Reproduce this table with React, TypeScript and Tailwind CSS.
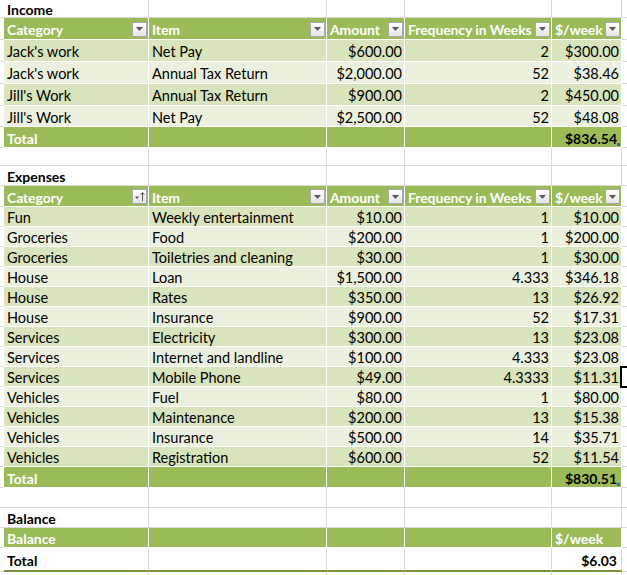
import React from "react";

const GRID = "grid grid-cols-[4px_145px_178px_78px_147px_70px_60px]";
const GRAY = "border-[#D9D9D9]";

type Kind = "title" | "header" | "band1" | "band2" | "total" | "blank" | "bheader" | "btotal";

function FilterBtn({ sort }: { sort?: boolean }) {
  return (
    <div className="w-[15px] h-[15px] shrink-0 border border-[#A9A9A9] bg-gradient-to-b from-white to-[#E4E4E4] flex items-center justify-center -mt-[2px]">
      {sort ? (
        <svg width="13" height="13" viewBox="0 0 13 13">
          <path d="M2 6.5 L6 6.5 L4 9 Z" fill="#555" />
          <path d="M9.5 11 L9.5 3" stroke="#555" strokeWidth="1" />
          <path d="M7.5 5 L9.5 2.5 L11.5 5" stroke="#555" strokeWidth="1" fill="none" />
        </svg>
      ) : (
        <svg width="9" height="6" viewBox="0 0 9 6">
          <path d="M1 1 L8 1 L4.5 5 Z" fill="#5A5A5A" />
        </svg>
      )}
    </div>
  );
}

function Row({
  kind,
  h,
  cells,
  sortFirst,
}: {
  kind: Kind;
  h: string;
  cells: string[];
  sortFirst?: boolean;
}) {
  const isTable = kind === "header" || kind === "band1" || kind === "band2" || kind === "total" || kind === "bheader";
  const bg =
    kind === "header" || kind === "total" || kind === "bheader"
      ? "bg-[#9BBB59]"
      : kind === "band1"
      ? "bg-[#D8E4BC]"
      : kind === "band2"
      ? "bg-[#EBF1DE]"
      : "bg-white";
  const border = isTable ? "border-white" : GRAY;
  const bottom = kind === "btotal" ? "border-b-2 border-b-[#77933C]" : "border-b";
  return (
    <div className={`${GRID} ${h}`}>
      <div className={`border-b ${GRAY}`} />
      {[0, 1, 2, 3, 4].map((i) => {
        const text = cells[i] ?? "";
        const right = i >= 2;
        let content: React.ReactNode = null;
        if (kind === "header") {
          content = (
            <div className="flex items-center justify-between w-full pl-[3px] pr-[1px]">
              <span className="font-bold text-white whitespace-nowrap text-[14px] tracking-[-0.1px]">{text}</span>
              <FilterBtn sort={sortFirst && i === 0} />
            </div>
          );
        } else if (kind === "bheader") {
          content = <span className="font-bold text-white pl-[3px] text-[14px]">{text}</span>;
        } else if (kind === "title") {
          content = <span className="font-bold text-black pl-[3px] text-[14px]">{text}</span>;
        } else if (kind === "total" || kind === "btotal") {
          if (i === 0)
            content = (
              <span className={`font-bold pl-[3px] text-[14px] ${kind === "total" ? "text-white" : "text-black"}`}>
                {text}
              </span>
            );
          else if (i === 4)
            content = <span className="font-bold text-black w-full text-right pr-[4px] text-[14px]">{text}</span>;
        } else if (text) {
          content = (
            <span className={`text-black w-full whitespace-nowrap ${right ? "text-right pr-[2px]" : "pl-[3px]"}`}>
              {text}
            </span>
          );
        }
        return (
          <div
            key={i}
            className={`relative flex items-center pt-[3px] overflow-hidden border-r ${bottom} ${border} ${bg} ${
              kind === "btotal" ? "border-r-[#D9D9D9]" : ""
            }`}
          >
            {content}
            {kind === "total" && i === 4 && (
              <span className="absolute right-[1px] bottom-[1px] w-[3px] h-[3px] bg-[#4466BB]" />
            )}
          </div>
        );
      })}
      <div className={`border-b ${GRAY}`} />
    </div>
  );
}

const income = [
  ["Jack's work", "Net Pay", "$600.00", "2", "$300.00"],
  ["Jack's work", "Annual Tax Return", "$2,000.00", "52", "$38.46"],
  ["Jill's Work", "Annual Tax Return", "$900.00", "2", "$450.00"],
  ["Jill's Work", "Net Pay", "$2,500.00", "52", "$48.08"],
];

const expenses = [
  ["Fun", "Weekly entertainment", "$10.00", "1", "$10.00"],
  ["Groceries", "Food", "$200.00", "1", "$200.00"],
  ["Groceries", "Toiletries and cleaning", "$30.00", "1", "$30.00"],
  ["House", "Loan", "$1,500.00", "4.333", "$346.18"],
  ["House", "Rates", "$350.00", "13", "$26.92"],
  ["House", "Insurance", "$900.00", "52", "$17.31"],
  ["Services", "Electricity", "$300.00", "13", "$23.08"],
  ["Services", "Internet and landline", "$100.00", "4.333", "$23.08"],
  ["Services", "Mobile Phone", "$49.00", "4.3333", "$11.31"],
  ["Vehicles", "Fuel", "$80.00", "1", "$80.00"],
  ["Vehicles", "Maintenance", "$200.00", "13", "$15.38"],
  ["Vehicles", "Insurance", "$500.00", "14", "$35.71"],
  ["Vehicles", "Registration", "$600.00", "52", "$11.54"],
];

const headers = ["Category", "Item", "Amount", "Frequency in Weeks", "$/week"];
const incomeHeights = ["h-[22px]", "h-[22px]", "h-[22px]", "h-[21px]"];

export default function App() {
  return (
    <div className="relative w-[627px] h-[575px] overflow-hidden bg-white font-['Lato',sans-serif] text-[14.5px] leading-[16px]">
      <Row kind="title" h="h-[18px]" cells={["Income"]} />
      <Row kind="header" h="h-[22px]" cells={headers} />
      {income.map((r, i) => (
        <Row key={i} kind={i % 2 === 0 ? "band1" : "band2"} h={incomeHeights[i]} cells={r} />
      ))}
      <Row kind="total" h="h-[21px]" cells={["Total", "", "", "", "$836.54"]} />
      <Row kind="blank" h="h-[18px]" cells={[]} />
      <Row kind="title" h="h-[20px]" cells={["Expenses"]} />
      <Row kind="header" h="h-[21px]" cells={headers} sortFirst />
      {expenses.map((r, i) => (
        <Row key={i} kind={i % 2 === 0 ? "band1" : "band2"} h="h-[20px]" cells={r} />
      ))}
      <Row kind="total" h="h-[21px]" cells={["Total", "", "", "", "$830.51"]} />
      <Row kind="blank" h="h-[20px]" cells={[]} />
      <Row kind="title" h="h-[20px]" cells={["Balance"]} />
      <Row kind="bheader" h="h-[20px]" cells={["Balance", "", "", "", "$/week"]} />
      <Row kind="btotal" h="h-[24px]" cells={["Total", "", "", "", "$6.03"]} />
      <Row kind="blank" h="h-[20px]" cells={[]} />
      <div className="absolute left-[620px] top-[366px] w-[40px] h-[22px] border-[2px] border-black" />
    </div>
  );
}
